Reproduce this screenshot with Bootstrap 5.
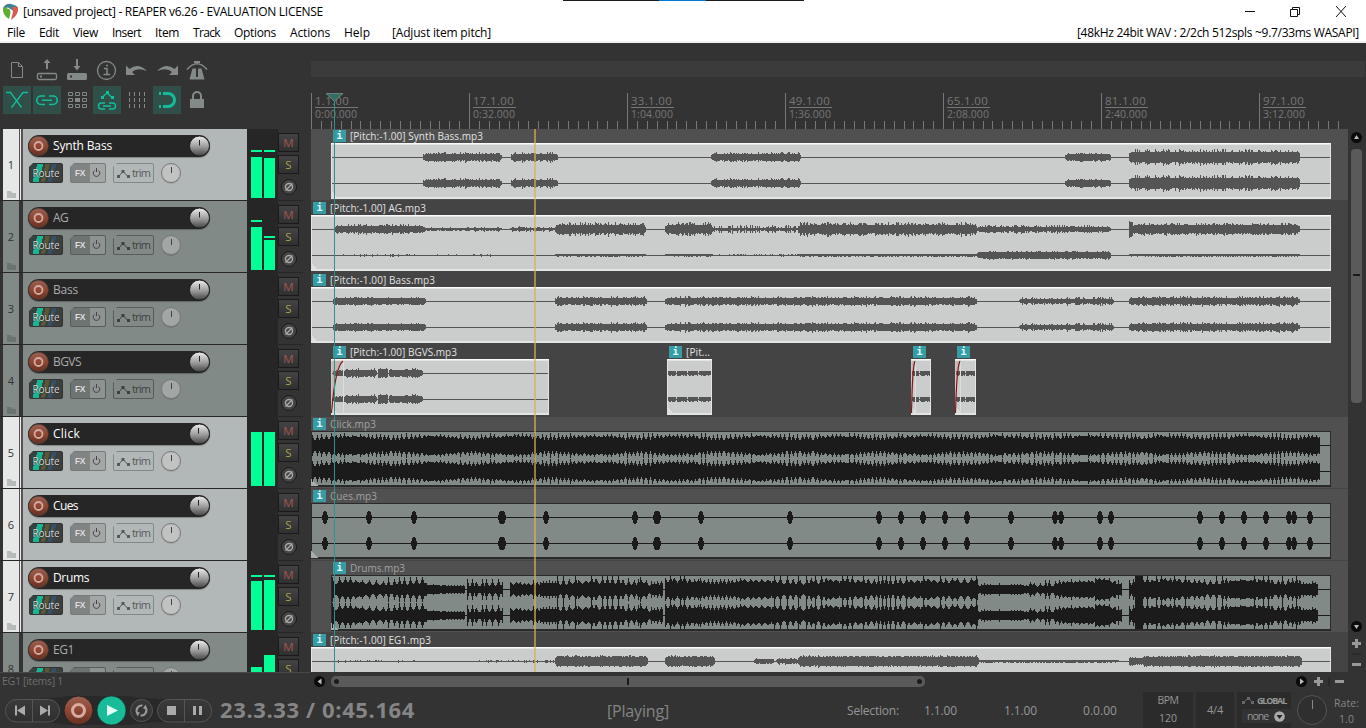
<!DOCTYPE html>
<html lang="en">
<head>
<meta charset="utf-8">
<title>[unsaved project] - REAPER v6.26 - EVALUATION LICENSE</title>
<link href="https://cdn.jsdelivr.net/npm/bootstrap@5.3.0/dist/css/bootstrap.min.css" rel="stylesheet">
<script src="https://cdn.jsdelivr.net/npm/bootstrap@5.3.0/dist/js/bootstrap.bundle.min.js"></script>
<style>
body{width:1366px;height:728px;overflow:hidden;background:#333;font-family:"Open Sans","Noto Sans",sans-serif;font-size:12px;line-height:1;color:#858585}
svg{display:block;flex:none}
[data-w]{display:inline-block;white-space:nowrap;line-height:16px}
.titlebar{height:24px;background:#fff;color:#000;padding:0 20px 0 2px}
.taskedge{left:563px;top:0;width:241px;height:1px;background:linear-gradient(90deg,#1b1b1b 40%,#0078d7 40%,#0078d7 59.5%,#1b1b1b 59.5%)}
.menubar{height:19px;background:#fff;color:#000;border-bottom:2px solid #f0f0f0;padding:0 7px;gap:14px}
.upper{height:86px}
.tools{width:311px;padding:13px 0 0 3px}
.toolrow{gap:2px;height:30px}
.tool{width:28px;height:28px;color:#838a88}
.tool.active{background:#304f49;color:#14bd9a}
.timeline{width:1055px;padding-top:18px}
.region{height:16px;background:#3b3b3b;width:1054px}
.ruler{height:52px;width:1037px;overflow:hidden;padding-top:16px}
.major{width:158px;border-left:1px solid #777;height:36px;flex:none;color:#777;padding:1px 0 0 3px}
.bar{font-size:11.5px;border-bottom:1px solid #777;width:43px;height:14px}
.bar span,.tm span{line-height:13px}
.tm{font-size:10.5px;height:13px}
.main{height:543px}
.tcp{width:303px;height:543px;overflow:hidden;background:#262626;margin-right:8px}
.track{height:72px;border-bottom:1px solid #262626;padding-left:3px;background:#333}
.num{width:16px;background:#828a88;color:#333;font-size:11px;text-align:center;padding-top:30px}
.sel .num{background:#e6e8e7}
.folder{margin:21px 0 0 4px;opacity:.6}
.edge{width:4px;background:#333}
.sel .edge{background:linear-gradient(90deg,#5a5254 1px,#e6e8e7 1px,#e6e8e7 2px,#5a5254 2px)}
.panel{width:224px;background:#828a88;padding:6px 0 0 5px}
.sel .panel{background:#b2b8b7}
.namebar{width:182px;height:22px;border-radius:11px;background:#262626;color:#aaa;box-shadow:0 1px 1px #0004}
.sel .namebar{color:#fff}
.nm{margin-left:4px;font-size:12px;flex:1}
.ctl{margin:6px 0 0 1px;gap:7px;font-size:10px}
.cbtn{height:20px;border:1px solid #555c5a;border-radius:2px;box-shadow:0 2px 1px #0002;overflow:hidden}
.cbtn [data-w]{line-height:18px}
.route{width:34px;color:#ddd;border-color:#333;background:linear-gradient(105deg,#3b3f3e 20%,#18b595 20%,#18b595 36%,#3b3f3e 36%,#3b3f3e 42%,#5d5636 42%,#5d5636 54%,#3b3f3e 54%,#3b3f3e 60%,#364f63 60%,#364f63 72%,#3b3f3e 72%)}
.route span{text-shadow:0 0 1px #000}
.fx{width:36px;background:linear-gradient(90deg,#6d7472 19px,#8c9391 19px);color:#ddd}
.fx b{font:bold 8.5px "Liberation Sans",sans-serif}
.sel .fx{background:linear-gradient(90deg,#808483 19px,#a3a7a6 19px);border-color:#777c7b}
.trim{width:41px;color:#3b4140;font-size:11px}
.sel .trim{border-color:#838887;color:#555b5a}
.notch{clip-path:polygon(0 4px,4px 0,100% 0,100% 100%,0 100%)}
.meter{width:31px;background:#262626;padding:0 3px 2px 4px}
.side{width:22px;padding-top:4px;margin-right:3px}
.sbtn{width:21px;height:19px;background:linear-gradient(#434343,#303030);border:1px solid #1b1b1b;font-size:11.5px;margin-bottom:3px}
.arrange{width:1037px;background:#444}
.lanes{height:543px;overflow:hidden}
.lane{height:72px;background:#444}
.lane.lsel{background:#505050;border-bottom:1px solid #454545}
.clip{flex:none}
.clabel{height:14px;font-size:10px;color:#e2e2e2;padding-left:2px}
.off .clabel{color:#a3a3a3}
.ibox{width:13px;height:12px;background:#379ca4;color:#dff;font:bold 10px/12px "DejaVu Sans Mono",monospace;text-align:center;margin-right:4px;flex:none}
.playline{left:223px;top:0;width:2px;height:543px;background:#d6b44a;opacity:.65}
.editline{left:14px;top:-37px}
.vscroll{width:18px}
.hscroll{height:18px}
.status{width:311px;font-size:10.5px;color:#6f6f6f;border-top:1px solid #484848;padding-left:2px}
.transport{height:38px}
.box{background:#2b2b2b;height:36px;margin-top:2px}
.digits{font-size:22px;font-weight:700;line-height:26px!important}
.playing{font-size:16px;line-height:22px!important}
.val{color:#969696}
</style>
</head>
<body class="d-flex flex-column position-relative">
<div class="position-absolute taskedge"></div>
<header class="titlebar d-flex align-items-center">
  <svg width="17" height="18" viewBox="0 0 17 18"><path d="M1 5Q4 0 9 1L15 3Q13 9 10 7Q6 4 1 5" fill="#3f8197"/><path d="M1 5Q7 3 9 8L7 16Q0 12 1 5" fill="#60ad33"/><path d="M10 4L16 4Q17 12 9 17L11 9Z" fill="#d65b52"/><path d="M5 5Q10 5 9 13" fill="none" stroke="#fff"/></svg>
  <span class="ms-1" data-w="300">[unsaved project] - REAPER v6.26 - EVALUATION LICENSE</span>
  <svg class="ms-auto" width="102" height="14" viewBox="0 0 102 14" fill="none" stroke="#111"><path d="M1 6.500h10M46.500 4.500h7v7h-7zM48.500 4V2.500h7v7h-2M92 1l10 11M102 1L92 12"/></svg>
</header>
<nav class="menubar d-flex align-items-center">
  <span data-w="18">File</span><span data-w="20">Edit</span><span data-w="25">View</span><span data-w="29">Insert</span><span data-w="24">Item</span><span data-w="27">Track</span><span data-w="42">Options</span><span data-w="40">Actions</span><span data-w="26">Help</span><span class="ms-2" data-w="99">[Adjust item pitch]</span>
  <span class="ms-auto" data-w="282">[48kHz 24bit WAV : 2/2ch 512spls ~9.7/33ms WASAPI]</span>
</nav>
<section class="upper d-flex">
  <div class="tools" id="tools"></div>
  <div class="timeline">
    <div class="region"></div>
    <div class="ruler d-flex" id="ruler"></div>
  </div>
</section>
<main class="main d-flex">
  <div class="tcp" id="tcp"></div>
  <div class="arrange position-relative">
    <div class="lanes" id="lanes"></div>
    <div class="position-absolute playline"></div>
    <svg class="position-absolute editline" width="20" height="580"><path d="M1 1.500h17l-8.500 8z" fill="#317165" stroke="#838a88" stroke-width=".8"/><path d="M9.500 9v571" stroke="#2a9683"/></svg>
  </div>
  <div class="vscroll">
    <svg width="18" height="543" viewBox="0 0 18 543"><circle cx="8.500" cy="8.500" r="5.500" fill="#0b0b0b"/><path d="M6 10h5l-2.500-4z" fill="#bbb"/><rect x="3" y="20" width="11" height="254" rx="4" fill="#5a5a5a"/><path d="M5 146h7" stroke="#1b1b1b" stroke-width="2"/><circle cx="8.500" cy="497.500" r="5.500" fill="#0b0b0b"/><path d="M6 496h5l-2.500 4z" fill="#bbb"/><path d="M4 514.500h9M8.500 510v9M4 535.500h9" stroke="#999" stroke-width="3"/><path d="M4 525h9" stroke="#222"/></svg>
  </div>
</main>
<div class="hscroll d-flex">
  <div class="status"><span data-w="61">EG1 [items] 1</span></div>
  <svg width="1055" height="18" viewBox="0 0 1055 18"><circle cx="8.500" cy="9.500" r="5.500" fill="#0b0b0b"/><path d="M10.500 6.500v6L6.500 9.500z" fill="#bbb"/><rect x="20" y="4" width="594" height="11" rx="5" fill="#5a5a5a"/><circle cx="25.500" cy="9.500" r="2.500" fill="#1b1b1b"/><circle cx="608.500" cy="9.500" r="2.500" fill="#1b1b1b"/><path d="M317 6v7" stroke="#1b1b1b" stroke-width="2"/><circle cx="990.500" cy="9.500" r="5.500" fill="#0b0b0b"/><path d="M989 6.500v6l4-3z" fill="#bbb"/><path d="M1003 9.500h9M1007.500 5v9M1024 9.500h9" stroke="#999" stroke-width="3"/><path d="M1018 5v9" stroke="#222"/></svg>
</div>
<footer class="transport d-flex">
  <svg width="216" height="38" viewBox="0 0 216 38">
    <defs><linearGradient id="gr" x2="0" y2="1"><stop stop-color="#9c6050"/><stop offset=".5" stop-color="#8f4733"/><stop offset="1" stop-color="#63301f"/></linearGradient>
    <linearGradient id="gg" x2="0" y2="1"><stop stop-color="#3a3a3a"/><stop offset="1" stop-color="#303030"/></linearGradient></defs>
    <path d="M30 9Q60 8 66 6h64q12 3 40 3v23q-28 0-40 3H66Q54 32 30 32z" fill="#292929"/>
    <g fill="url(#gg)" stroke="#555"><rect x="5.500" y="9.500" width="54" height="22.500" rx="11"/><path d="M32.500 10v22"/><rect x="157.500" y="9.500" width="54" height="22.500" rx="11"/><path d="M184.500 10v22"/><circle cx="141.500" cy="20.500" r="11"/></g>
    <path d="M15 15.500h2v10h-2zM25 15.500v10l-8-5zM40 15.500v10l8-5zM48 15.500h2v10h-2zM167 16h9v9h-9zM193 16h3v9h-3zM199 16h3v9h-3z" fill="#aaa"/>
    <circle cx="78.500" cy="20.500" r="14.500" fill="url(#gr)" stroke="#222"/><circle cx="78.500" cy="20.500" r="6" fill="none" stroke="#d8aaa0" stroke-width="3"/>
    <circle cx="111.500" cy="20.500" r="14.500" fill="#19bc99" stroke="#1b1b1b" stroke-width=".6"/><path d="M107 15v11l11-5.500z" fill="#e3fff7"/>
    <path d="M137.600 23.500A5 5 0 0 1 142.500 15.600M145.400 17.500A5 5 0 0 1 140.500 25.400" fill="none" stroke="#999" stroke-width="2"/><path d="M135.500 21.500l4.500 1-2.500 4zM147.500 19.500l-4.500-1 2.500-4z" fill="#999"/>
  </svg>
  <span class="digits align-self-center ms-1" data-w="195">23.3.33 / 0:45.164</span>
  <span class="playing align-self-center mt-1" style="margin-left:192px" data-w="62">[Playing]</span>
  <div class="d-flex val align-items-center pt-1" style="margin-left:178px"><span data-w="52">Selection:</span><span style="margin-left:25px" data-w="33">1.1.00</span><span style="margin-left:47px" data-w="33">1.1.00</span><span style="margin-left:46px" data-w="34">0.0.00</span></div>
  <div class="d-flex val" style="margin-left:26px;gap:3px">
    <div class="box d-flex flex-column align-items-center" style="width:50px;font-size:10.5px;padding-bottom:2px"><span data-w="21">BPM</span><span class="mt-auto" data-w="18">120</span></div>
    <div class="box d-flex align-items-center justify-content-center" style="width:38px;font-size:11px"><span data-w="16">4/4</span></div>
    <div class="box" style="width:54px;font-size:9px">
      <div class="d-flex" style="padding:1px 0 0 5px;gap:3px"><svg width="12" height="14"><path d="M1 10l5-5 5 5" fill="none" stroke="#666"/><path d="M0 8h3v3H0zM5 4h3v3H5zM9 8h3v3H9z" fill="#666"/></svg><b data-w="29">GLOBAL</b></div>
      <div class="d-flex align-items-center" style="margin-left:5px;height:14px;background:#333;padding-left:5px;font-size:10.500px"><span data-w="21">none</span><svg class="ms-auto" style="margin-right:6px" width="11" height="11"><circle cx="5.500" cy="5.500" r="5.300" fill="#aaa"/><path d="M2.500 4h6l-3 4z" fill="#222"/></svg></div>
    </div>
  </div>
  <svg width="41" height="38"><circle cx="21" cy="20" r="14.500" fill="#2f2f2f" stroke="#555"/><path d="M21.500 10v9" stroke="#888"/></svg>
  <div class="d-flex flex-column align-items-center" style="font-size:10.500px;margin-left:2px;padding-top:5px"><span data-w="25">Rate:</span><span data-w="15">1.0</span></div>
</footer>
<script>
const $=id=>document.getElementById(id);
/* toolbar */
const icons=[
 ['<path d="M8.500 6.500h7l4 4v11h-11zM15.500 6.500v4h4" fill="none" stroke="currentColor"/>',
  '<path d="M14 13V5" stroke="currentColor" stroke-width="2"/><path d="M10.500 7h7L14 3z" fill="currentColor"/><rect x="4.500" y="17.500" width="19" height="6" rx="1.500" fill="none" stroke="currentColor" stroke-width="1.300"/><path d="M7 20.500h2" stroke="currentColor" stroke-width="2"/>',
  '<path d="M14 3v8" stroke="currentColor" stroke-width="2"/><path d="M10.500 10h7L14 14.500z" fill="currentColor"/><rect x="4" y="17" width="20" height="7" rx="1.500" fill="currentColor"/><path d="M7 20.500h2" stroke="#333" stroke-width="2"/>',
  '<circle cx="13.500" cy="14.500" r="9" fill="none" stroke="currentColor" stroke-width="1.300"/><path d="M11 12.500h3v6M10.500 18.500h6.500M13 9.500h2" fill="none" stroke="currentColor" stroke-width="1.500"/>',
  '<path d="M3 9.500V19h9l-3-3q5-5 15-1Q15 6 6.500 13z" fill="currentColor"/>',
  '<path d="M25 9.500V19h-9l3-3q-5-5-15-1Q13 6 21.500 13z" fill="currentColor"/>',
  '<path d="M4 13.500Q14 2 24 13.500" fill="none" stroke="currentColor" stroke-width="1.500"/><path d="M11 5h6v2h-6zM9.500 12.500h9l3 11h-15z" fill="currentColor"/><path d="M14 11v10" stroke="#333" stroke-width="2"/>'],
 ['<path d="M3 6.500h4.500l11 15M25 6.500h-5L8.500 21.500" fill="none" stroke="currentColor" stroke-width="1.300"/>',
  '<path d="M12 10H8a4 4 0 0 0 0 8.500h4M16 10h4a4 4 0 0 1 0 8.500h-4M9 14.300h10" fill="none" stroke="currentColor" stroke-width="1.600"/>',
  '<path d="M5.500 6.500h4v3h-4zM12.500 6.500h4v3h-4zM19.500 6.500h4v3h-4zM5.500 12.500h4v3h-4zM19.500 12.500h4v3h-4zM5.500 18.500h4v3h-4zM12.500 18.500h4v3h-4zM19.500 18.500h4v3h-4z" fill="none" stroke="currentColor"/><path d="M12 12h5v4h-5z" fill="currentColor"/>',
  '<path d="M9 11.500l5-4.500 5 4.500M12 17H8.500a2.800 2.800 0 0 0 0 6H12M16 17h3.500a2.800 2.800 0 0 1 0 6H16M10 20h8" fill="none" stroke="currentColor" stroke-width="1.400"/><path d="M8 10h3v3H8zM13 5h3v3h-3zM18 10h3v3h-3z" fill="currentColor"/>',
  '<path d="M6.500 6v17M11.500 6v17M16.500 6v17M21.500 6v17" stroke="currentColor" stroke-dasharray="4 2"/>',
  '<path d="M10 7.500h5a6.300 6.300 0 0 1 0 13h-5" fill="none" stroke="currentColor" stroke-width="3"/><path d="M6 6h2v3H6zM6 19h2v3H6z" fill="currentColor"/>',
  '<path d="M7 13h14v9H7z" fill="currentColor"/><path d="M10 13v-3a4 4 0 0 1 8 0v3" fill="none" stroke="currentColor" stroke-width="2"/>']];
$('tools').innerHTML=icons.map((row,r)=>`<div class="toolrow d-flex">`+row.map((p,i)=>`<span class="tool ${r&&[0,1,3,5].includes(i)?'active':''}"><svg width="28" height="28" viewBox="0 0 28 28">${p}</svg></span>`).join('')+'</div>').join('');
/* ruler */
const times=['0:00.000','0:32.000','1:04.000','1:36.000','2:08.000','2:40.000','3:12.000'];
$('ruler').innerHTML=times.map((t,i)=>{let d='';for(let k=1;k<16;k++)d+=`M${Math.round(k*9.875)-3.5} 0v8`;
 return `<div class="major"><div class="bar"><span data-w="${i?41:34}">${i*16+1}.1.00</span></div><div class="tm"><span data-w="42">${t}</span></div><svg width="154" height="8" stroke="#777" shape-rendering="crispEdges"><path d="${d}"/></svg></div>`}).join('');
/* waveforms: segments are [start, end, low, high, spike spacing] in timeline pixels */
let seed=7;const rnd=()=>(seed=(seed*16807)%2147483647)/2147483647;
function chan(segs,cy,s){seed=s;for(let k=0;k<5;k++)rnd();let d='';
 for(const[a,b,lo,hi,p]of segs){let pk=hi,last=a,next=a,body=lo;
  for(let x=a;x<b;x++){let h;
   if(p>1){if(x>=next){last=x;next=x+p+(p>4?Math.floor(rnd()*3)-1:(rnd()<.15?1:0));
     pk=p>4?(rnd()<.4?hi:lo+(hi-lo)*(.25+.45*rnd())):lo+(hi-lo)*(.4+.6*rnd());
     body=lo*(.85+.2*Math.sin(x/13)+.2*rnd())}
    const q=Math.min(x-last,next-x);h=q<.5?pk:q<1.5?body+(pk-body)*.4:q<2.5?body:body*.85}
   else h=p?lo:lo+(hi-lo)*Math.pow(rnd(),2.6);
   const e=Math.min(x-a,b-1-x);if(!p&&e<2&&b-a>14)h*=.6+.2*e;
   h=Math.min(h,13);const u=Math.round(h),v=p?u:Math.max(0,Math.round(h-rnd()));d+=`M${x+.5} ${cy-u}V${cy+v+1}`}}
 return d}
const cue=[325,369,414,501,503,546,635,656,658,701,790,879,901,923,945,967,1011,1055,1061,1100,1111,1200,1222,1244,1266,1289,1294,1310];
const cues=cue.flatMap(c=>[[c-3,c-2,2,2,1],[c-2,c-1,5,5,1],[c-1,c+1,6,6,1],[c+1,c+2,5,5,1],[c+2,c+3,2,2,1]]);
const sb=[[423,502,3,5],[511,558,3,5],[711,801,3,5],[1065,1111,3,4],[1129,1300,5,8]];
const ag=[[334,425,3,5],[425,502,1,2],[510,555,1,3],[555,646,4,7],[665,713,4,7],[713,798,1,4],[798,977,4,7],[977,1111,2,4],[1129,1133,7,8],[1132,1300,4,6]];
const ag2=[[340,502,0,1],[555,646,1,1],[665,713,1,1],[713,798,0,1],[798,977,1,1],[977,1111,3,4],[1129,1300,1,1]];
const bass=[[333,426,3,4],[555,647,3,5],[665,977,3,5],[1019,1114,2,4],[1129,1300,3,5]];
const drums=[[332,427,6,12,6],[427,465,3,5,3],[467,503,4,10,5],[510,540,4,9,5],[540,557,6,9,3],[557,640,6,13,5],[640,647,9,12,7],[647,663,4,8,3],[665,700,7,13,5],[700,745,7,11,4],[745,800,7,13,6],[800,900,7,13,5],[900,945,7,13,5],[945,978,9,13,6],[978,1030,3,6,3],[1030,1055,4,9,5],[1055,1095,6,10,4],[1095,1115,9,13,5],[1115,1122,4,9,3],[1129,1135,6,11,4],[1135,1142,13,13,1],[1142,1300,7,13,5],[1300,1318,4,8,3]];
const eg=[[334,420,0,1],[478,555,0,1.5],[555,648,4.4,5.6],[665,715,4.4,5.6],[754,774,2,3],[776,798,2,3],[798,979,4.4,5.6],[979,1119,1,1.5],[1129,1142,3,4],[1142,1302,4.4,5.6]];
const bg=[[333,344,2,3],[344,377,3,5],[378,388,4,5],[389,423,3,5]];
const T=[
 {n:'Synth Bass',w:59,s:1,m:[41,40],pk:[47,47],c:[[331,1331,'[Pitch:-1.00] Synth Bass.mp3',133,sb]]},
 {n:'AG',w:15,m:[43,30],pk:[49,33],c:[[311,1331,'[Pitch:-1.00] AG.mp3',96,ag,ag2]]},
 {n:'Bass',w:25,m:[0,0],c:[[311,1331,'[Pitch:-1.00] Bass.mp3',105,bass]]},
 {n:'BGVS',w:28,m:[0,0],c:[[331,549,'[Pitch:-1.00] BGVS.mp3',107,bg,null,12],[667,712,'[Pit...',24,[[668,676,2,2],[677,687,2,2],[688,698,2,2],[699,711,2,2]]],[911,931,'',0,[[912,919,2,2],[920,930,2,2]],null,4],[955,976,'',0,[[956,965,2,2],[966,975,2,2]],null,5]]},
 {n:'Click',w:27,s:1,m:[54,54],off:1,c:[[311,1331,'Click.mp3',46,[[312,1320,7,12,4]]]]},
 {n:'Cues',w:25,s:1,m:[0,0],off:1,c:[[311,1331,'Cues.mp3',47,cues]]},
 {n:'Drums',w:36,s:1,m:[49,50],pk:[54,54],off:1,c:[[331,1331,'Drums.mp3',55,drums]]},
 {n:'EG1',w:21,m:[0,0],eg:[34,22],c:[[311,1331,'[Pitch:-1.00] EG1.mp3',101,eg]]}];
const rec='<svg width="21" height="22"><circle cx="10.500" cy="11" r="9.800" fill="url(#gr)" stroke="#50403b" stroke-width=".7"/><circle cx="10.500" cy="11" r="4" fill="none" stroke="#d6aaa0" stroke-width="1.800"/></svg>';
const knob=i=>`<svg width="21" height="22"><defs><linearGradient id="kn" x2="0" y2="1"><stop stop-color="#eee"/><stop offset=".55" stop-color="#999"/><stop offset="1" stop-color="#444"/></linearGradient></defs><circle cx="10.500" cy="11" r="10" fill="url(#kn)" stroke="#222"/><path d="M${i>3?9.5:10.5} 5v5.500" stroke="#222"/></svg>`;
$('tcp').innerHTML=T.map((t,i)=>{
 const lab=(s,w)=>t.eg?'':`<span data-w="${w}">${s}</span>`;
 const bars=t.m.map((h,k)=>`<svg width="11" height="71"><g fill="#00ff94"><rect y="${t.eg?t.eg[k]:69-h}" width="11" height="${t.eg?37:h}"/>${t.pk?`<rect y="${68-t.pk[k]}" width="11" height="2"/>`:''}</g></svg>`).join('');
 return `<div class="track d-flex ${t.s?'sel':''}"><div class="num">${i+1}<svg class="folder" width="9" height="7"><path d="M0 0h4l1 2h4v5H0z" fill="${t.s?'#989e9c':'#5d6462'}"/></svg></div><div class="edge"></div>
 <div class="panel"><div class="namebar d-flex align-items-center">${rec}<span class="nm"><span data-w="${t.w}">${t.n}</span></span>${knob(i)}</div>
 <div class="ctl d-flex"><span class="cbtn route notch d-flex justify-content-center align-items-center">${lab('Route',27)}</span>
 <span class="cbtn fx notch d-flex align-items-center">${t.eg?'':'<b class="ps-1" data-w="14">FX</b>'}<svg class="ms-auto me-1" width="9" height="10" fill="none" stroke="#444"><path d="M2.500 2.500a3.300 3.300 0 1 0 4 0M4.500 0v4"/></svg></span>
 <span class="cbtn trim notch d-flex align-items-center"><svg style="margin:0 2px 0 3px" width="13" height="9"><path d="M1.500 7.500l4.500-5 5 5" fill="none" stroke="currentColor"/><path d="M0 6h3v3H0zM4.500 1h3v3h-3zM10 6h3v3h-3z" fill="currentColor"/></svg>${lab('trim',18)}</span>
 <svg width="20" height="22"><circle cx="10" cy="11.500" r="9.500" fill="#0002"/><circle cx="10" cy="10" r="9.500" fill="${t.s?'#c0c3c2':'#a2a7a5'}" stroke="#777"/><path d="M10.500 4v6" stroke="#444"/></svg></div></div>
 <div class="meter d-flex justify-content-between">${bars}</div>
 <div class="side"><div class="sbtn d-flex justify-content-center align-items-center" style="color:#a55550">M</div><div class="sbtn d-flex justify-content-center align-items-center" style="color:#a7a252">S</div><svg width="22" height="20"><circle cx="11" cy="10" r="7.500" fill="#444" stroke="#1b1b1b"/><circle cx="11" cy="10" r="3.500" fill="none" stroke="#aaa" stroke-width="1.400"/><path d="M7.500 13.500l7-7" stroke="#aaa" stroke-width="1.200"/></svg></div></div>`}).join('');
$('lanes').innerHTML=T.map((t,i)=>{let pos=311;
 return `<div class="lane d-flex ${t.s?'lsel':''} ${t.off?'off':''}">`+t.c.map(([a,b,label,lw,s1,s2,fade])=>{const m=a-pos,w=b-a;pos=b;const wc=t.off?'#1b1b1b':'#555';
  return `<div class="clip" style="margin-left:${m}px;width:${w}px"><div class="clabel d-flex align-items-center"><span class="ibox">i</span>${label?`<span data-w="${lw}">${label}</span>`:''}</div>
  <svg width="${w}" height="56" viewBox="${a} 0 ${w} 56" shape-rendering="crispEdges"><rect x="${a}" width="${w}" height="56" fill="${t.off?'#2a2a2a':'#e3e4e3'}"/><rect x="${a+1}" y="${t.off?1:2}" width="${w-2}" height="${t.off?53:52}" fill="${t.off?'#828a88':'#cbcdcc'}"/>${t.off?'':`<path d="M${a} .5h${w}" stroke="#fafafa"/>`}
  <path d="M${a} 48l7 7h-7z" fill="${t.off?'#a8adab':'#dedfdf'}"/><path d="M${a+1} 14.500H${b-1}M${a+1} 40.500H${b-1}" stroke="${wc}"/><path d="${chan(s1,14,i*31+9)+chan(s2||s1,40,i*31+9)}" stroke="${wc}"/>
  ${fade?`<path d="M${a} 2h${fade}Q${a+fade*.35} 10 ${a} 54z" fill="#a9777744"/><path d="M${a+fade+.5} 2v52" stroke="#ddd"/><path d="M${a+.5} 54Q${a+fade*.35} 8 ${a+fade} 2" fill="none" stroke="#8a1515" stroke-width="1.200" shape-rendering="auto"/>`:''}</svg></div>`}).join('')+'</div>'}).join('');
/* fit each label to its column width */
document.querySelectorAll('[data-w]').forEach(e=>{const n=e.textContent.length;e.style.letterSpacing='0px';const w=e.getBoundingClientRect().width;e.style.letterSpacing=((+e.dataset.w-w)/n).toFixed(3)+'px'});
</script>
</body>
</html>
